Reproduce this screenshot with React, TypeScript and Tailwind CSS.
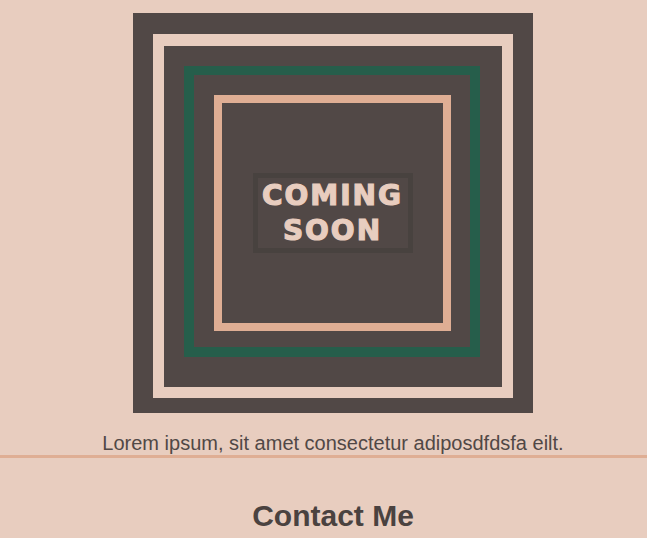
export default function App() {
  return (
    <div className="min-h-[538px] w-full bg-[#e8cdbf] font-['Liberation_Sans',Arial,sans-serif] text-[#514846]">
      <section className="flex flex-col items-center pl-[19px] pt-[13px] border-b-[3px] border-[#dfae94]">
        {/* Framed placeholder */}
        <div className="w-[400px] h-[400px] bg-[#514846] pt-[21px] pl-[20px]">
          <div className="box-border w-[360px] h-[364px] border-[11px] border-t-[12px] border-[#e8cdbf] pt-[20px] pl-[20px]">
            <div className="box-border w-[296px] h-[291px] border-[10px] border-t-[9px] border-[#265e4b] pt-[20px] pl-[20px]">
              <div className="box-border w-[237px] h-[236px] border-[8px] border-[#dfae94] flex items-center justify-center">
                <div className="box-border w-[160px] h-[80px] border-[5px] border-[#48423f] flex flex-col items-center justify-center">
                  <span className="font-['DejaVu_Sans',sans-serif] font-bold text-[28px] leading-[35px] tracking-[2px] text-[#e8cdbf] [-webkit-text-stroke:1.2px_#e8cdbf]">
                    COMING
                  </span>
                  <span className="font-['DejaVu_Sans',sans-serif] font-bold text-[28px] leading-[35px] tracking-[2px] text-[#e8cdbf] [-webkit-text-stroke:1.2px_#e8cdbf]">
                    SOON
                  </span>
                </div>
              </div>
            </div>
          </div>
        </div>
        <p className="mt-[19px] text-[20px] leading-[23px]">
          Lorem ipsum, sit amet consectetur adiposdfdsfa eilt.
        </p>
      </section>
      <section className="flex flex-col items-center pl-[19px] pt-[35px]">
        <h2 className="text-[30px] font-bold text-[#4a4240]">Contact Me</h2>
      </section>
    </div>
  );
}
